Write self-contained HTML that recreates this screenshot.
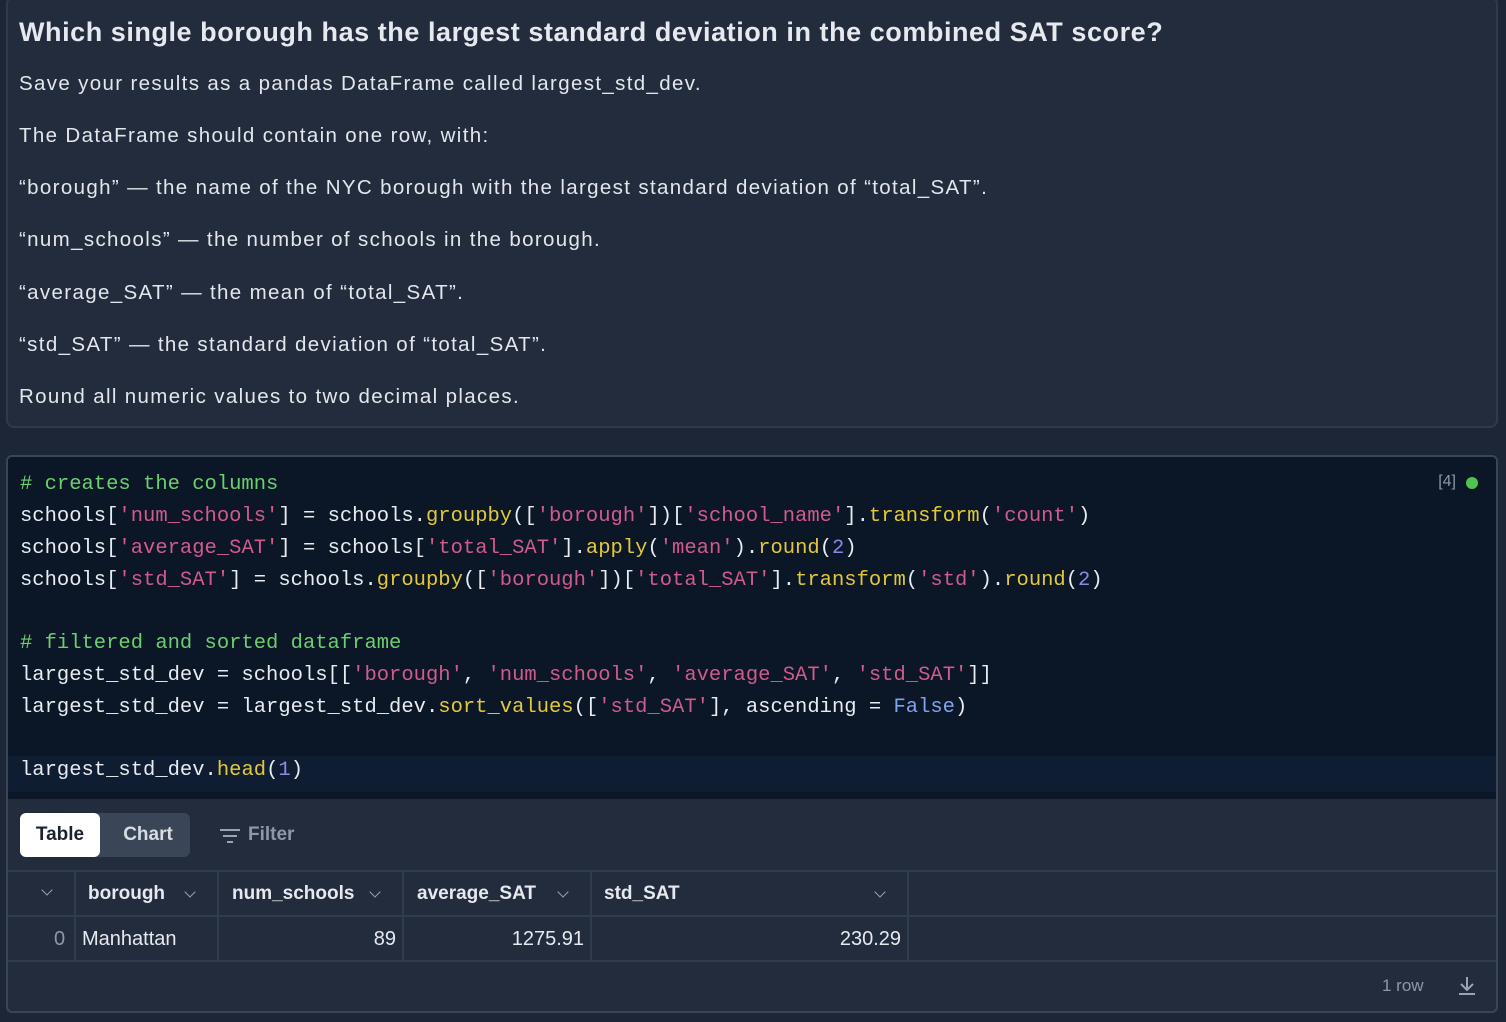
<!DOCTYPE html>
<html><head><meta charset="utf-8"><style>
*{margin:0;padding:0;box-sizing:border-box}
body{width:1506px;height:1022px;background:#1d2636;font-family:"Liberation Sans",sans-serif;color:#e6e9ef;position:relative;overflow:hidden}
.top{position:absolute;left:6px;top:-4px;width:1492px;height:432px;background:#222c3d;border:2px solid #2f3a4b;border-radius:8px}
.t{position:absolute;left:19px;white-space:nowrap}
h1{font-size:27px;font-weight:bold;letter-spacing:0.55px}
.p{font-size:20.5px;color:#e3e6ec;letter-spacing:1.35px}
.cell{position:absolute;left:6px;top:455px;width:1492px;height:558px;border:2px solid #3a4556;border-radius:6px;background:#222c3c;overflow:hidden}
.code{position:absolute;left:0;top:0;width:100%;height:342px;background:#0b1627}
.hl{position:absolute;left:0;top:299px;width:100%;height:36px;background:#0f1d33}
.ln{position:absolute;left:12px;font-family:"Liberation Mono",monospace;font-size:20.5px;white-space:pre;color:#e8ebf0;line-height:24px}
.c{color:#6ccf6e}.s{color:#d05b8c}.f{color:#e3c93a}.n{color:#8d88e6}.b{color:#7ea4ee}
.tb{position:absolute;top:356px;height:44px;border-radius:6px;font-weight:bold;font-size:19px;line-height:44px;text-align:center}
.hline{position:absolute;left:0;width:100%;height:2px;background:#303b4c}
.vl{position:absolute;width:2px;background:#303b4c}
.th{position:absolute;top:426px;font-weight:bold;font-size:19px;color:#e6e9ef}
.chev{position:absolute;width:8px;height:8px;border-right:1.5px solid #9aa3b2;border-bottom:1.5px solid #9aa3b2;transform:rotate(45deg)}
.td{position:absolute;top:471px;font-size:20px}
</style></head><body>
<div class="top"></div>
<div class="t" style="top:17px"><h1>Which single borough has the largest standard deviation in the combined SAT score?</h1></div>
<div class="t p" style="top:72px">Save your results as a pandas DataFrame called largest_std_dev.</div>
<div class="t p" style="top:124px">The DataFrame should contain one row, with:</div>
<div class="t p" style="top:176px">“borough” — the name of the NYC borough with the largest standard deviation of “total_SAT”.</div>
<div class="t p" style="top:228px">“num_schools” — the number of schools in the borough.</div>
<div class="t p" style="top:281px">“average_SAT” — the mean of “total_SAT”.</div>
<div class="t p" style="top:333px">“std_SAT” — the standard deviation of “total_SAT”.</div>
<div class="t p" style="top:385px">Round all numeric values to two decimal places.</div>

<div class="cell">
<div class="code"></div>
<div class="hl"></div>
<div style="position:absolute;right:40px;top:16px;color:#8e97a6;font-size:16px">[4]</div>
<div style="position:absolute;right:18px;top:20px;width:12px;height:12px;border-radius:6px;background:#4fc24f"></div>
<div class="ln" style="top:16px"><span class="c"># creates the columns</span></div>
<div class="ln" style="top:48px">schools[<span class="s">'num_schools'</span>] = schools.<span class="f">groupby</span>([<span class="s">'borough'</span>])[<span class="s">'school_name'</span>].<span class="f">transform</span>(<span class="s">'count'</span>)</div>
<div class="ln" style="top:80px">schools[<span class="s">'average_SAT'</span>] = schools[<span class="s">'total_SAT'</span>].<span class="f">apply</span>(<span class="s">'mean'</span>).<span class="f">round</span>(<span class="n">2</span>)</div>
<div class="ln" style="top:112px">schools[<span class="s">'std_SAT'</span>] = schools.<span class="f">groupby</span>([<span class="s">'borough'</span>])[<span class="s">'total_SAT'</span>].<span class="f">transform</span>(<span class="s">'std'</span>).<span class="f">round</span>(<span class="n">2</span>)</div>
<div class="ln" style="top:175px"><span class="c"># filtered and sorted dataframe</span></div>
<div class="ln" style="top:207px">largest_std_dev = schools[[<span class="s">'borough'</span>, <span class="s">'num_schools'</span>, <span class="s">'average_SAT'</span>, <span class="s">'std_SAT'</span>]]</div>
<div class="ln" style="top:239px">largest_std_dev = largest_std_dev.<span class="f">sort_values</span>([<span class="s">'std_SAT'</span>], ascending = <span class="b">False</span>)</div>
<div class="ln" style="top:302px">largest_std_dev.<span class="f">head</span>(<span class="n">1</span>)</div>

<div class="tb" style="left:12px;width:170px;background:#3a4557"></div>
<div class="tb" style="left:12px;width:80px;background:#fff;color:#1a2230">Table</div>
<div class="tb" style="left:100px;width:80px;color:#d8dce3">Chart</div>
<svg style="position:absolute;left:211px;top:370px" width="24" height="18"><g stroke="#9aa3b2" stroke-width="2"><line x1="1" y1="3" x2="21" y2="3"/><line x1="4" y1="9" x2="18" y2="9"/><line x1="8" y1="15" x2="14" y2="15"/></g></svg>
<div style="position:absolute;left:240px;top:367px;font-size:19px;font-weight:bold;color:#8e97a6">Filter</div>

<div class="hline" style="top:413px"></div>
<div class="hline" style="top:458px"></div>
<div class="hline" style="top:503px"></div>
<div class="vl" style="left:66px;top:415px;height:88px"></div>
<div class="vl" style="left:209px;top:415px;height:88px"></div>
<div class="vl" style="left:394px;top:415px;height:88px"></div>
<div class="vl" style="left:582px;top:415px;height:88px"></div>
<div class="vl" style="left:899px;top:415px;height:88px"></div>

<div class="chev" style="left:35px;top:429px"></div>
<div class="th" style="left:80px">borough</div><div class="chev" style="left:178px;top:431px"></div>
<div class="th" style="left:224px">num_schools</div><div class="chev" style="left:363px;top:431px"></div>
<div class="th" style="left:409px">average_SAT</div><div class="chev" style="left:551px;top:431px"></div>
<div class="th" style="left:596px">std_SAT</div><div class="chev" style="left:868px;top:431px"></div>

<div class="td" style="left:46px;color:#8e97a6">0</div>
<div class="td" style="left:74px">Manhattan</div>
<div class="td" style="left:340px;width:48px;text-align:right">89</div>
<div class="td" style="left:470px;width:106px;text-align:right">1275.91</div>
<div class="td" style="left:780px;width:113px;text-align:right">230.29</div>

<div style="position:absolute;left:1374px;top:519px;font-size:17px;color:#8e97a6">1 row</div>
<svg style="position:absolute;left:1448px;top:518px" width="22" height="22"><g stroke="#9aa3b2" stroke-width="2" fill="none"><line x1="11" y1="2" x2="11" y2="14"/><polyline points="5,9 11,15 17,9"/><line x1="3" y1="19" x2="19" y2="19"/></g></svg>
</div>
</body></html>
